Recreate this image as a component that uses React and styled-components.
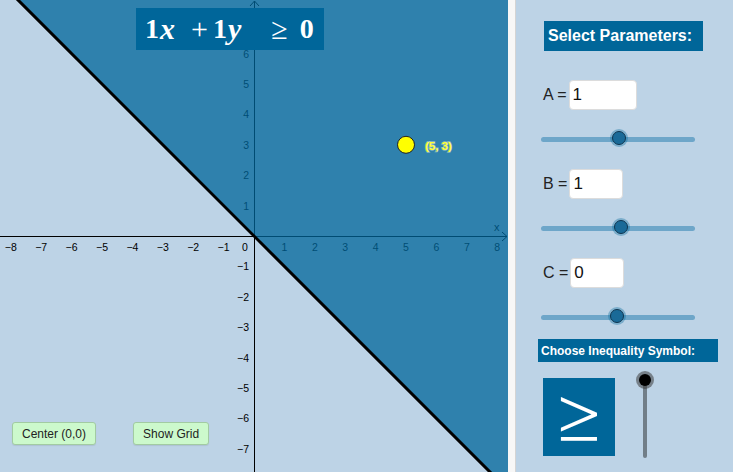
import React from 'react';
import styled, { createGlobalStyle } from 'styled-components';

const ORIGIN_X = 254;
const ORIGIN_Y = 236;
const UNIT = 30.4;
const VIEW_W = 508;
const VIEW_H = 472;

const GlobalStyle = createGlobalStyle`
  html, body {
    margin: 0;
    padding: 0;
    overflow: hidden;
    background: #bdd3e6;
  }
`;

function App() {
  return (
    <>
      <GlobalStyle />
      <Screen>
        <Canvas>
          <Graph />
          <Formula>
            <Num>1</Num>
            <Var gap={16}>x</Var>
            <Op>+</Op>
            <Num>1</Num>
            <Var gap={30}>y</Var>
            <Rel>≥</Rel>
            <Num>0</Num>
          </Formula>
          <ButtonRow>
            <GreenButton>Center (0,0)</GreenButton>
            <GreenButton>Show Grid</GreenButton>
          </ButtonRow>
        </Canvas>
        <Divider />
        <Panel>
          <Title>Select Parameters:</Title>
          <Param label="A" value="1" inputWidth={68} pos={51.5} first />
          <Param label="B" value="1" inputWidth={54} pos={52.5} />
          <Param label="C" value="0" inputWidth={54} pos={50.3} />
          <ChooseTitle>Choose Inequality Symbol:</ChooseTitle>
          <SymbolRow>
            <SymbolBox>≥</SymbolBox>
            <VSlider>
              <VTrack />
              <VThumb />
            </VSlider>
          </SymbolRow>
        </Panel>
      </Screen>
    </>
  );
}

function Param({ label, value, inputWidth, pos, first }) {
  return (
    <ParamBlock first={first}>
      <ParamRow>
        <ParamLabel>{label} =</ParamLabel>
        <ParamInput w={inputWidth}>{value}</ParamInput>
      </ParamRow>
      <HSlider>
        <HTrack />
        <HThumb style={{ left: `${pos}%` }} />
      </HSlider>
    </ParamBlock>
  );
}

function Graph() {
  const xs = [-8, -7, -6, -5, -4, -3, -2, -1, 1, 2, 3, 4, 5, 6, 7, 8];
  // 7 on the y axis sits under the formula box, so it is left out
  const ys = [-7, -6, -5, -4, -3, -2, -1, 1, 2, 3, 4, 5, 6];
  const fmt = (n) => (n < 0 ? `\u2212${-n}` : `${n}`);
  // x + y >= 0 : everything above/right of the line y = -x
  const lineTopX = ORIGIN_X - ORIGIN_Y;
  const lineBottomX = ORIGIN_X + (VIEW_H - ORIGIN_Y);
  const px = ORIGIN_X + 5 * UNIT;
  const py = ORIGIN_Y - 3 * UNIT;

  return (
    <svg width={VIEW_W} height={VIEW_H} style={{ display: 'block' }}>
      <rect width={VIEW_W} height={VIEW_H} fill="#bdd3e6" />
      <g stroke="#000" strokeWidth="1" fill="none">
        <line x1="0" y1={ORIGIN_Y + 0.5} x2={VIEW_W - 1} y2={ORIGIN_Y + 0.5} />
        <polyline points={`${VIEW_W - 6},${ORIGIN_Y - 4} ${VIEW_W - 1},${ORIGIN_Y + 0.5} ${VIEW_W - 6},${ORIGIN_Y + 5}`} />
        <line x1={ORIGIN_X + 0.5} y1="1" x2={ORIGIN_X + 0.5} y2={VIEW_H} />
        <polyline points={`${ORIGIN_X - 4},6 ${ORIGIN_X + 0.5},1 ${ORIGIN_X + 5},6`} />
      </g>
      <g fontFamily="'Liberation Sans', Arial, sans-serif" fontSize="10.5" fill="#000">
        {xs.map((n) => (
          <text key={`x${n}`} x={ORIGIN_X + n * UNIT} y={ORIGIN_Y + 15} textAnchor="middle">
            {fmt(n)}
          </text>
        ))}
        <text x={ORIGIN_X - 9} y={ORIGIN_Y + 15} textAnchor="middle">0</text>
        {ys.map((n) => (
          <text key={`y${n}`} x={ORIGIN_X - 5} y={ORIGIN_Y - n * UNIT + 4} textAnchor="end">
            {fmt(n)}
          </text>
        ))}
        <text x={VIEW_W - 14} y={ORIGIN_Y - 5} fontSize="11">x</text>
      </g>
      <polygon
        points={`${lineTopX},0 ${VIEW_W},0 ${VIEW_W},${VIEW_H} ${lineBottomX},${VIEW_H}`}
        fill="#006699"
        fillOpacity="0.75"
      />
      <line
        x1={lineTopX - 20}
        y1={-20}
        x2={lineBottomX + 20}
        y2={VIEW_H + 20}
        stroke="#000"
        strokeWidth="3"
      />
      <circle cx={px} cy={py} r="8.5" fill="#ffff00" stroke="#222" strokeWidth="1" />
      <text
        x={px + 19}
        y={py + 5}
        fontFamily="'Liberation Sans', Arial, sans-serif"
        fontSize="11.5"
        fontWeight="bold"
        fill="#ffff33"
        stroke="rgba(255,255,220,0.45)"
        strokeWidth="1.5"
        paintOrder="stroke"
      >
        (5, 3)
      </text>
    </svg>
  );
}

const Screen = styled.div`
  display: flex;
  width: 733px;
  height: 472px;
  overflow: hidden;
  font-family: 'Liberation Sans', Arial, sans-serif;
`;

const Canvas = styled.div`
  position: relative;
  width: ${VIEW_W}px;
  height: ${VIEW_H}px;
  flex-shrink: 0;
`;

const Formula = styled.div`
  position: absolute;
  left: 136px;
  top: 8px;
  width: 188px;
  height: 42px;
  box-sizing: border-box;
  padding-left: 9px;
  display: flex;
  align-items: center;
  background: #00669a;
  color: #fff;
  font-family: 'Liberation Serif', 'Times New Roman', serif;
  font-size: 28px;
  font-weight: bold;
  white-space: nowrap;
`;

const Num = styled.span``;

const Var = styled.span`
  font-style: italic;
  font-size: 30px;
  margin-left: 1px;
  margin-right: ${(p) => p.gap}px;
`;

const Op = styled.span`
  font-weight: normal;
  font-size: 30px;
  margin-right: 5px;
`;

const Rel = styled.span`
  font-weight: normal;
  font-size: 30px;
  margin-right: 12px;
`;

const ButtonRow = styled.div`
  position: absolute;
  left: 12px;
  top: 422px;
  display: flex;
  gap: 37px;
`;

const GreenButton = styled.button`
  height: 23px;
  padding: 0 9px;
  background: #ccf9cc;
  border: 1px solid #a2cba2;
  border-radius: 3px;
  font-family: 'Liberation Sans', Arial, sans-serif;
  font-size: 12px;
  color: #222;
  box-shadow: 0 1px 1px rgba(0, 0, 0, 0.08);
`;

const Divider = styled.div`
  width: 7px;
  flex-shrink: 0;
  background: #f7f7f7;
  border-right: 1px solid #d4d4d4;
`;

const Panel = styled.div`
  flex: 1;
  display: flex;
  flex-direction: column;
  align-items: flex-start;
  padding-top: 21px;
  background: #bdd3e6;
`;

const Title = styled.div`
  margin-left: 28px;
  width: 159px;
  height: 30px;
  box-sizing: border-box;
  padding-left: 4px;
  display: flex;
  align-items: center;
  background: #006699;
  color: #fff;
  font-size: 16px;
  font-weight: bold;
`;

const ParamBlock = styled.div`
  margin-top: ${(p) => (p.first ? 29 : 22)}px;
  display: flex;
  flex-direction: column;
`;

const ParamRow = styled.div`
  display: flex;
  align-items: center;
  margin-left: 27px;
  height: 30px;
`;

const ParamLabel = styled.span`
  font-size: 16px;
  color: #222;
  margin-right: 2px;
`;

const ParamInput = styled.div`
  width: ${(p) => p.w}px;
  height: 30px;
  box-sizing: border-box;
  padding-left: 3px;
  display: flex;
  align-items: center;
  background: #fff;
  border: 1px solid #dcdcdc;
  border-radius: 4px;
  font-size: 17px;
  color: #111;
`;

const HSlider = styled.div`
  position: relative;
  margin: 21px 0 0 25px;
  width: 154px;
  height: 16px;
  display: flex;
  align-items: center;
`;

const HTrack = styled.div`
  width: 100%;
  height: 5px;
  border-radius: 3px;
  background: #6ea6c9;
`;

const HThumb = styled.div`
  position: absolute;
  top: 50%;
  width: 12px;
  height: 12px;
  margin: -8px 0 0 -8px;
  border-radius: 50%;
  background: #1a6a98;
  border: 1px solid #0e3550;
  box-shadow: 0 0 0 2px rgba(0, 102, 153, 0.35);
`;

const ChooseTitle = styled.div`
  margin: 14px 0 0 22px;
  width: 180px;
  height: 23px;
  box-sizing: border-box;
  padding-left: 3px;
  display: flex;
  align-items: center;
  background: #006699;
  color: #fff;
  font-size: 12px;
  font-weight: bold;
`;

const SymbolRow = styled.div`
  display: flex;
  align-items: flex-start;
  margin: 16px 0 0 27px;
`;

const SymbolBox = styled.div`
  width: 72px;
  height: 78px;
  box-sizing: border-box;
  padding-bottom: 8px;
  display: flex;
  align-items: center;
  justify-content: center;
  background: #006699;
  color: #fff;
  font-family: Inter, 'DejaVu Sans', sans-serif;
  font-weight: 200;
  font-size: 86px;
  line-height: 70px;
`;

const VSlider = styled.div`
  position: relative;
  margin: 2px 0 0 21px;
  width: 18px;
  height: 78px;
  display: flex;
  justify-content: center;
`;

const VTrack = styled.div`
  width: 4px;
  height: 100%;
  border-radius: 2px;
  background: #717e88;
`;

const VThumb = styled.div`
  position: absolute;
  left: 3px;
  top: -6px;
  width: 12px;
  height: 12px;
  border-radius: 50%;
  background: #000;
  box-shadow: 0 0 0 3px rgba(60, 60, 60, 0.55);
`;

export default App;
